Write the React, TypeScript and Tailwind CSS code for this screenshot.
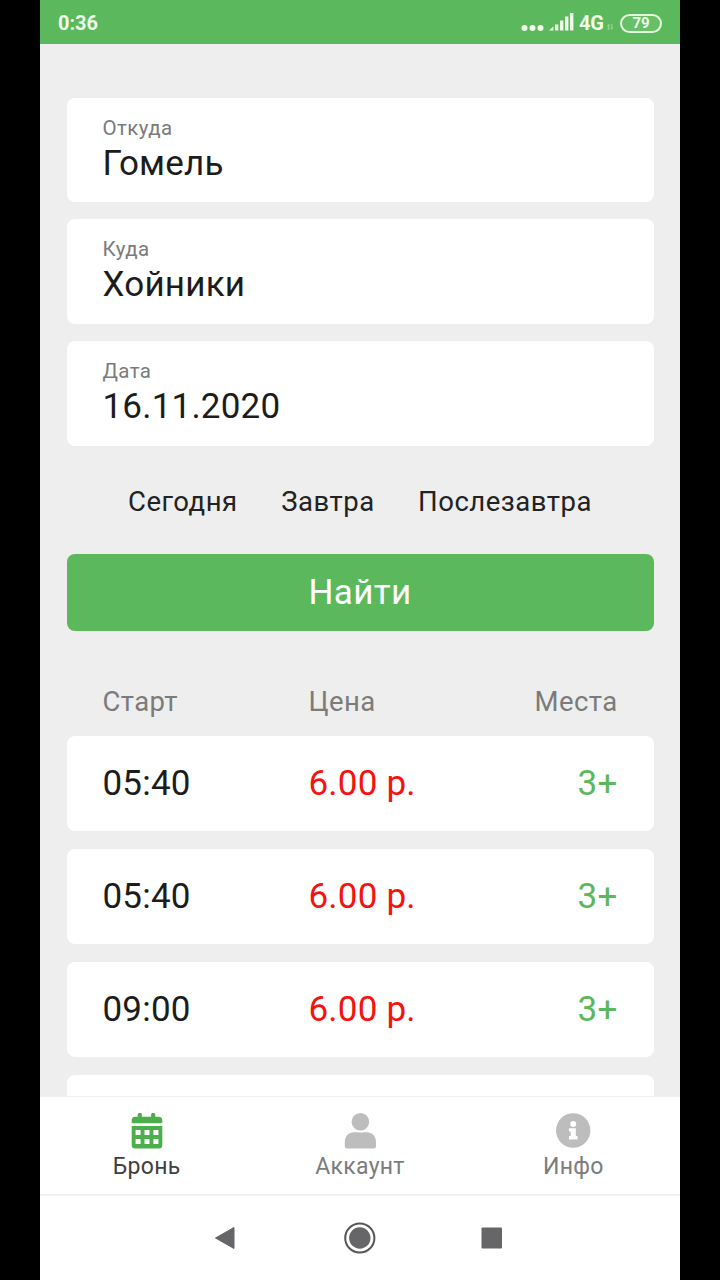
import React from 'react';

const CalendarIcon: React.FC = () => (
  <svg width="36" height="36" viewBox="0 0 36 36" fill="currentColor">
    <path d="M2.700 10.300V7.200a3.500 3.500 0 0 1 3.500-3.500h2.500V1.900a2.100 2.100 0 0 1 4.200 0v1.800h9.200V1.900a2.100 2.100 0 0 1 4.200 0v1.800h3.500a3.500 3.500 0 0 1 3.500 3.500v3.100z" />
    <path
      fillRule="evenodd"
      d="M2.700 13h30.600v19.200a3.300 3.300 0 0 1-3.300 3.300H6a3.300 3.300 0 0 1-3.300-3.300zM6.600 17v5h5v-5zM15.500 17v5h5v-5zM24.400 17v5h5v-5zM6.600 26v5h5v-5zM15.500 26v5h5v-5zM24.400 26v5h5v-5z"
    />
  </svg>
);

const UserIcon: React.FC = () => (
  <svg width="36" height="36" viewBox="0 0 36 36" fill="currentColor">
    <circle cx="18.4" cy="8.8" r="8.800" />
    <path d="M2.800 33v-4.200c0-5.600 4-9.500 9.200-9.500 2.500 0 3.800.2 6.400.2s3.900-.2 6.400-.2c5.200 0 9.200 3.900 9.200 9.500V33a2.500 2.500 0 0 1-2.500 2.500H5.300A2.500 2.500 0 0 1 2.800 33z" />
  </svg>
);

const InfoIcon: React.FC = () => (
  <svg width="36" height="36" viewBox="0 0 36 36">
    <circle cx="18.2" cy="17.5" r="17.2" fill="currentColor" />
    <circle cx="18.2" cy="11" r="3" fill="#ffffff" />
    <path d="M14 15.200h6.800v7.900h1.700v3.400H14v-3.400h1.700v-4.500H14z" fill="#ffffff" />
  </svg>
);

const fields = [
  { label: 'Откуда', value: 'Гомель' },
  { label: 'Куда', value: 'Хойники' },
  { label: 'Дата', value: '16.11.2020' },
];

const quickDates = ['Сегодня', 'Завтра', 'Послезавтра'];

const trips = [
  { id: 1, start: '05:40', price: '6.00 р.', seats: '3+' },
  { id: 2, start: '05:40', price: '6.00 р.', seats: '3+' },
  { id: 3, start: '09:00', price: '6.00 р.', seats: '3+' },
  { id: 4, start: '', price: '', seats: '' },
];

const tabs = [
  { name: 'Бронь', icon: <CalendarIcon />, active: true },
  { name: 'Аккаунт', icon: <UserIcon />, active: false },
  { name: 'Инфо', icon: <InfoIcon />, active: false },
];

const StatusBar: React.FC = () => (
  <div className="flex h-11 shrink-0 items-center justify-between bg-[#5cb85c] px-[18px] pt-0.5 text-[#eefbe9]">
    <span className="text-[20px] leading-6 font-bold">0:36</span>
    <div className="flex items-center">
      <svg width="54" height="24" viewBox="0 0 54 24" fill="currentColor">
        <circle cx="3.5" cy="17" r="3" />
        <circle cx="11.5" cy="17" r="3" />
        <circle cx="19.5" cy="17" r="3" />
        <path d="M28 19.500l4.400-4v4z" />
        <rect x="34" y="13.5" width="3.4" height="6" />
        <rect x="39" y="9.5" width="3.4" height="10" />
        <rect x="44" y="5.5" width="3.4" height="14" />
        <rect x="49" y="2" width="3.4" height="17.5" />
      </svg>
      <span className="ml-1 text-[20px] leading-6 font-bold">4G</span>
      <svg className="ml-0.5" width="8" height="24" viewBox="0 0 8 24" fill="#8fd08c">
        <path d="M1 15l1.600-2.500L4.200 15H3.400v4H1.800v-4zM4.200 16.500h.9V13h1.400v3.500h.9L5.800 19z" />
      </svg>
      <div className="ml-1.5 flex h-[19px] w-[42px] items-center justify-center rounded-full border-2 border-[#e2f8dc] bg-[#68bf67] text-[15px] leading-none font-bold">
        79
      </div>
    </div>
  </div>
);

const SystemNav: React.FC = () => (
  <div className="flex h-[84px] shrink-0 items-center justify-center gap-[100px] pb-px text-[#666567]">
    <svg width="34" height="34" viewBox="0 0 34 34" fill="currentColor">
      <path d="M6.500 17L25 6.500v21z" stroke="currentColor" strokeWidth="1" strokeLinejoin="round" />
    </svg>
    <svg width="34" height="34" viewBox="0 0 34 34">
      <circle cx="16.8" cy="17" r="14.6" fill="none" stroke="#565558" strokeWidth="2" />
      <circle cx="16.8" cy="17" r="10.7" fill="currentColor" />
    </svg>
    <svg width="34" height="34" viewBox="0 0 34 34" fill="currentColor">
      <rect x="4.5" y="6.5" width="20.5" height="21" rx="1" />
    </svg>
  </div>
);

const App: React.FC = () => {
  return (
    <div className="flex h-[1280px] w-[720px] justify-center overflow-hidden bg-black font-[Roboto,'Noto_Sans',sans-serif]">
      <div className="flex w-[640px] flex-col bg-white">
        <StatusBar />

        <main className="flex min-h-0 flex-1 flex-col overflow-hidden bg-[#eeeeee] px-[26.5px] pt-[53.6px]">
          <div className="flex shrink-0 flex-col gap-[17.7px]">
            {fields.map((field) => (
              <div key={field.label} className="h-[104.2px] rounded-lg bg-white px-9 pt-[18px]">
                <div className="text-[20.5px] leading-6 tracking-[0.4px] text-[#7b7b7b]">{field.label}</div>
                <div className="pt-px text-[35px] leading-[46px] tracking-[0.2px] text-[#1c1c1c]">{field.value}</div>
              </div>
            ))}
          </div>

          <div className="flex h-[108.5px] shrink-0 items-center justify-center gap-[43.5px] pt-[3px] text-[27.5px] tracking-[0.5px] text-[#222222]">
            {quickDates.map((day) => (
              <button key={day}>{day}</button>
            ))}
          </div>

          <button className="h-[77px] shrink-0 rounded-lg bg-[#5cb85c] pt-px text-[35px] tracking-[0.4px] text-white">
            Найти
          </button>

          <div className="grid h-[105px] shrink-0 grid-cols-[206px_1fr_auto] items-end px-9 pb-[14px] text-[27.5px] leading-10 tracking-[0.4px] text-[#7b7b7b]">
            <span>Старт</span>
            <span>Цена</span>
            <span>Места</span>
          </div>

          <div className="flex flex-col gap-[18px]">
            {trips.map((trip) => (
              <div
                key={trip.id}
                className="grid h-[95px] shrink-0 grid-cols-[206px_1fr_auto] items-center rounded-lg bg-white px-9 pt-0.5 text-[35px] tracking-[0.2px]"
              >
                <span className="text-[#1c1c1c]">{trip.start}</span>
                <span className="text-[#f5120f]">{trip.price}</span>
                <span className="text-[#5cb85c]">{trip.seats}</span>
              </div>
            ))}
          </div>
        </main>

        <nav className="grid h-[100px] shrink-0 grid-cols-3 border-t border-b-2 border-[#f0f0f0]">
          {tabs.map((tab) => (
            <button key={tab.name} className="flex flex-col items-center justify-start pt-4">
              <span className={tab.active ? 'text-[#4caf4c]' : 'text-[#bdbdbd]'}>{tab.icon}</span>
              <span
                className={`mt-0.5 text-[23px] leading-8 tracking-[0.3px] ${
                  tab.active ? 'text-[#404040]' : 'text-[#7c7c7c]'
                }`}
              >
                {tab.name}
              </span>
            </button>
          ))}
        </nav>

        <SystemNav />
      </div>
    </div>
  );
};

export default App;
